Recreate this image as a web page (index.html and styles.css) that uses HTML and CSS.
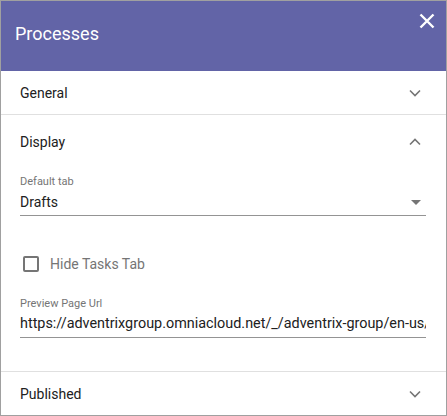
FILE: index.html
```html
<!DOCTYPE html>
<html>
<head>
<meta charset="utf-8">
<link rel="stylesheet" href="styles.css">
</head>
<body>
<div class="panel">
  <div class="header">
    <div class="title">Processes</div>
    <svg class="close" width="16" height="16" viewBox="0 0 16 16"><path d="M1.5 1.5 L14.5 14.5 M14.5 1.5 L1.5 14.5" stroke="#fff" stroke-width="2.4" fill="none"/></svg>
  </div>
  <div class="section">
    <div class="sec-head collapsed">
      <span>General</span>
      <svg class="chev" width="12" height="8" viewBox="0 0 12 8"><path d="M1 1.5 L6 6.5 L11 1.5" stroke="#757575" stroke-width="1.6" fill="none"/></svg>
    </div>
  </div>
  <div class="section open">
    <div class="sec-head expanded">
      <span>Display</span>
      <svg class="chev" width="12" height="8" viewBox="0 0 12 8"><path d="M1 6.5 L6 1.5 L11 6.5" stroke="#757575" stroke-width="1.6" fill="none"/></svg>
    </div>
    <div class="sec-body">
      <div class="field select">
        <div class="label">Default tab</div>
        <div class="value-row">
          <span class="value">Drafts</span>
          <svg class="caret" width="10" height="5" viewBox="0 0 10 5"><path d="M0 0 L10 0 L5 5 Z" fill="#757575"/></svg>
        </div>
      </div>
      <div class="check-row">
        <span class="box"></span>
        <span class="check-label">Hide Tasks Tab</span>
      </div>
      <div class="field url">
        <div class="label">Preview Page Url</div>
        <div class="value-row">
          <span class="value">https://adventrixgroup.omniacloud.net/_/adventrix-group/en-us/</span>
        </div>
      </div>
    </div>
  </div>
  <div class="section last">
    <div class="sec-head collapsed">
      <span>Published</span>
      <svg class="chev" width="12" height="8" viewBox="0 0 12 8"><path d="M1 1.5 L6 6.5 L11 1.5" stroke="#757575" stroke-width="1.6" fill="none"/></svg>
    </div>
  </div>
</div>
</body>
</html>
```
FILE: styles.css
```css
html, body {
  margin: 0;
  padding: 0;
  background: #fff;
}
body {
  font-family: Roboto, "Liberation Sans", sans-serif;
  color: #212121;
}
.panel {
  width: 445px;
  height: 414px;
  border: 1px solid #a0a0a0;
  display: flex;
  flex-direction: column;
  overflow: hidden;
}
.header {
  height: 71px;
  background: #6264a7;
  display: flex;
  justify-content: space-between;
  align-items: flex-start;
  box-sizing: border-box;
  padding: 0 11px 0 14px;
}
.title {
  color: #fff;
  font-size: 18px;
  line-height: 22px;
  margin-top: 22px;
}
.close {
  margin-top: 12px;
}
.section {
  border-bottom: 1px solid #e0e0e0;
}
.section.last {
  border-bottom: none;
  flex: 1;
}
.sec-head {
  display: flex;
  justify-content: space-between;
  align-items: center;
  padding: 0 25px 0 19px;
  font-size: 14px;
}
.sec-head.collapsed {
  height: 43px;
}
.sec-head.expanded {
  height: 54px;
}
.chev {
  display: block;
}
.sec-body {
  padding: 6px 20px 0 19px;
  height: 202px;
  box-sizing: border-box;
}
.field {
  border-bottom: 1px solid #949494;
}
.label {
  font-size: 11px;
  line-height: 14px;
  color: #757575;
}
.value-row {
  display: flex;
  align-items: center;
  justify-content: space-between;
  height: 26px;
  overflow: hidden;
  white-space: nowrap;
}
.value {
  font-size: 14px;
  line-height: 18px;
}
.url .value {
  font-size: 14.4px;
}
.caret {
  margin-right: 5px;
}
.check-row {
  display: flex;
  align-items: center;
  margin-top: 40px;
  height: 16px;
}
.box {
  width: 12px;
  height: 12px;
  border: 2px solid #757575;
  border-radius: 2px;
  margin-left: 3px;
}
.check-label {
  margin-left: 11px;
  font-size: 14px;
  color: #757575;
}
.url {
  margin-top: 25px;
}
```
